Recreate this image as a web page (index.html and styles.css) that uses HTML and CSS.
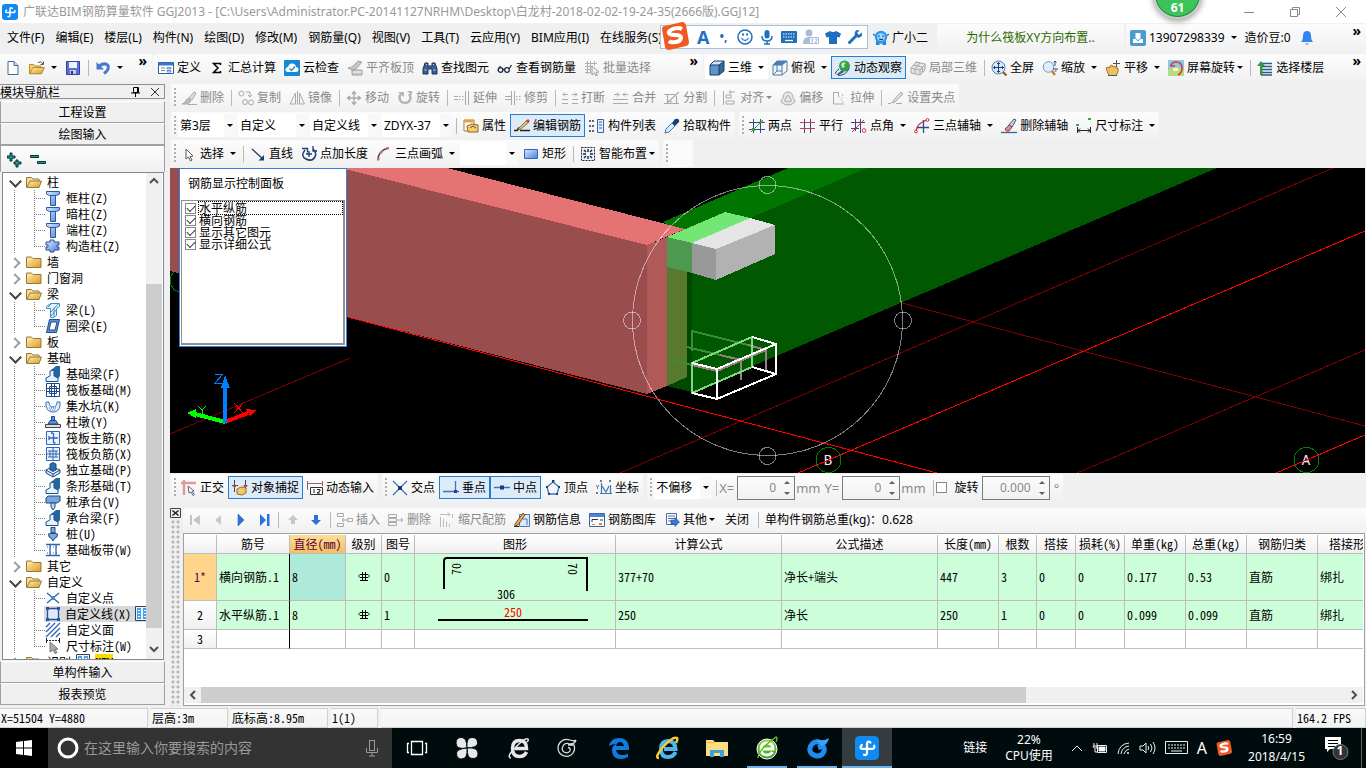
FILE: index.html
```html
<!DOCTYPE html>
<html lang="zh-CN">
<head>
  <meta charset="UTF-8">
  <meta name="viewport" content="width=device-width, initial-scale=1">
  <title>广联达BIM钢筋算量软件 GGJ2013</title>
  <link rel="stylesheet" href="styles.css">
</head>
<body>

<!-- icon set -->
<svg class="defs" aria-hidden="true">
  <defs>
    <linearGradient id="gold" x1="0" y1="0" x2="1" y2="1"><stop offset="0" stop-color="#fff0b0"/><stop offset="1" stop-color="#dc9a20"/></linearGradient>
    <linearGradient id="sky" x1="0" y1="0" x2="1" y2="1"><stop offset="0" stop-color="#d8e8ff"/><stop offset="1" stop-color="#4a7fe0"/></linearGradient>
    <linearGradient id="lime" x1="0" y1="0" x2="0" y2="1"><stop offset="0" stop-color="#8be03c"/><stop offset="1" stop-color="#2c9a1c"/></linearGradient>
  </defs>
  <symbol id="logo" viewBox="0 0 16 16"><rect width="16" height="16" rx="3" fill="#0f8af0"/><path d="M10.300 4.300Q8 2.800 8 5.500v5.500Q8 13.200 6 12.500M4.500 6Q2.500 8.500 5 8.500h6.500Q13.300 8.500 12.800 6.500" fill="none" stroke="#fff" stroke-width="1.500" stroke-linecap="round"/></symbol>
  <symbol id="new" viewBox="0 0 16 16"><path d="M3 1.500h6l4 4v9H3z" fill="#fff" stroke="#47689c"/><path d="M9 1.500v4h4" fill="#c9d8f0" stroke="#47689c"/></symbol>
  <symbol id="open" viewBox="0 0 16 16"><path d="M.5 13.500V4.500h4l1.500 1.500h6v7.500z" fill="#f6d272" stroke="#b98a2c"/><path d="M.8 13.800l3-6.300h11.700l-3 6.300z" fill="url(#gold)" stroke="#b98a2c"/><path d="M9 2.500q3-2 5 1.500m.5-2.500v3h-3" fill="none" stroke="#555"/></symbol>
  <symbol id="save" viewBox="0 0 16 16"><path d="M1.500 1.500h13v13h-13z" fill="#5a6fd4" stroke="#3a3f9c"/><path d="M4 2h8v6H4z" fill="#eef2ff"/><path d="M5 10h6v4H5z" fill="#c8ccdc"/><path d="M6 11h2v3H6z" fill="#2b3580"/></symbol>
  <symbol id="undo" viewBox="0 0 16 16"><path d="M4 6q6-4 9-.5 1.500 4-4 8" fill="none" stroke="#4a78d0" stroke-width="3"/><path d="M1.500 2v7.500h7.500z" fill="#4a78d0"/></symbol>
  <symbol id="define" viewBox="0 0 16 16"><path d="M.5 2.500h15v11H.5z" fill="#fff" stroke="#2e5a9e"/><path d="M1 2.500h14v3H1z" fill="#3f74c4"/><path d="M3 8h4M3 10.500h4" stroke="#888"/><path d="M9 7.500h4v1.500H9zM9 10.500h4v1.500H9z" fill="#cfe0fa" stroke="#3f74c4" stroke-width=".7"/></symbol>
  <symbol id="sigma" viewBox="0 0 16 16"><path d="M11.500 5V3.500H4.500L9 8l-4.500 4.500h7V11" fill="none" stroke="#000" stroke-width="1.500"/></symbol>
  <symbol id="cloudcheck" viewBox="0 0 16 16"><rect width="16" height="16" rx="1" fill="#1787d8"/><path d="M4 12q-3-.5-2.500-3 .5-2 2.500-2 1-4 4.500-3.500Q12 4 12 7q3 .5 2.500 3-.5 2-2.500 2z" fill="#fff"/><path d="M5.500 8.500l2 2 3.500-4" fill="none" stroke="#1787d8" stroke-width="1.300"/></symbol>
  <symbol id="slab" viewBox="0 0 16 16"><path d="M1 8l4-1 6-6 4 1-6 7-4 1zM5 10h10v5H5z" fill="#c6c6c6" stroke="#a4a4a4"/><path d="M6 12h8" stroke="#fff"/></symbol>
  <symbol id="binoc" viewBox="0 0 16 16"><path d="M3 3h3v3h4V3h3l2 6v5h-5V9H6v5H1V9z" fill="#3b5d8f" stroke="#1e355c"/><path d="M2.500 10h2M11.500 10h2M4 4.500h1M11 4.500h1" stroke="#cfe0fa"/></symbol>
  <symbol id="glasses" viewBox="0 0 16 16"><g fill="none" stroke="#222b44" stroke-width="1.300"><circle cx="3.500" cy="10" r="2.300"/><circle cx="10" cy="10" r="2.300"/><path d="M6 9.500h2M1.500 9l2-3M12 9l2.500-4"/></g></symbol>
  <symbol id="batch" viewBox="0 0 16 16"><path d="M1 3.500h12M1 6.500h8M1 9.500h6M1 12.500h6M3.500 1v13M6.500 1v13M10.500 1v5" stroke="#b0b0b0" fill="none"/><path d="M8 6l7 6-3 .5 1.500 3-1.500.5-1.500-3-2.500 2z" fill="#eee" stroke="#a0a0a0"/></symbol>
  <symbol id="cube" viewBox="0 0 16 16"><path d="M1 5h9v10H1z" fill="#5f96c8"/><path d="M1 5l4-4h10l-5 4z" fill="#cfe6f8"/><path d="M10 5l5-4v10l-5 4z" fill="#33689c"/><path d="M1 5h9v10H1zM1 5l4-4h10l-5 4M15 1v10l-5 4" fill="none" stroke="#1d4166"/></symbol>
  <symbol id="wirecube" viewBox="0 0 16 16"><path d="M1 5h9v10H1z" fill="#eaf4fc"/><path d="M1 5l4-4h10l-5 4z" fill="#4f7fb0"/><path d="M1 5h9v10H1zM1 5l4-4h10l-5 4M15 1v10l-5 4M5 5v6h5M1 15l4-4" fill="none" stroke="#527ca6"/></symbol>
  <symbol id="orbit" viewBox="0 0 16 16"><circle cx="9.500" cy="6" r="5.500" fill="#35a04a"/><path d="M6 4q2-3 5-1l-2 2 1 2-3 1z" fill="#b8f0a8"/><path d="M0 14q1-3 4-5M3 15.500q8 0 11-7" stroke="#445" fill="none"/><path d="M1 15l6-5 2 2-5 3z" fill="#2a6a9c"/></symbol>
  <symbol id="local3d" viewBox="0 0 16 16"><path d="M1 8l5-6 9 2v6l-5 5-9-2zM1 8l9 2 5-6M10 10v5M6 2l4 1-5 6v5M3.500 5l9 2v6" fill="#e2e2e2" stroke="#aaa"/></symbol>
  <symbol id="full" viewBox="0 0 16 16"><path d="M11.500 11.500l4 4" stroke="#8f5a2c" stroke-width="2.200"/><circle cx="7.500" cy="7.500" r="6.500" fill="#d8e8fa" stroke="#5f7fa8"/><path d="M7.500 2.500v10M2.500 7.500h10M6 4l1.500-1.500L9 4M6 11l1.500 1.500L9 11M4 6L2.500 7.500 4 9M11 6l1.500 1.500L11 9" fill="none" stroke="#223a70"/></symbol>
  <symbol id="zoomi" viewBox="0 0 16 16"><path d="M9 10l4 5" stroke="#d08020" stroke-width="2.500"/><circle cx="6.500" cy="7" r="5.300" fill="#dfeefa" stroke="#7a96b8"/><path d="M13 1v5M11.500 2.500L13 1l1.500 1.500M11 9h5M12.500 11h2" stroke="#2a4a80" fill="none"/></symbol>
  <symbol id="pan" viewBox="0 0 16 16"><path d="M1 8l2-1 2 1V6l2-1 1 2 2-1 1 2 2 0v4l-2 4H4z" fill="#f0c060" stroke="#a87820"/><path d="M11.500 0v7M8 3.500h7M3 15.500h9" stroke="#456"/></symbol>
  <symbol id="rotscreen" viewBox="0 0 16 16"><path d="M0 0h16v16H0z" fill="#8cc8ea"/><path d="M0 10q8-6 16 0v6H0z" fill="#b8dc80"/><path d="M2.500 6Q4 2 8 2q6 0 6 6 0 5-4 7M3 6l4 0" fill="none" stroke="#d83a3a" stroke-width="1.600"/><path d="M5 8h5v3H5z" fill="#fff6b0"/></symbol>
  <symbol id="floors" viewBox="0 0 16 16"><path d="M4 3.500h11M4 6.500h11M4 9.500h11M4 12.500h11M4 15h11" stroke="#2a5d86" stroke-width="1.500"/><path d="M0 6l4-5 4 5H5.500v9H3V6z" fill="#38963c"/></symbol>
  <!-- modify tools, drawn greyed -->
  <symbol id="brush" viewBox="0 0 16 16"><path d="M8 8l5-6 2 1-4 7z" fill="#ddd" stroke="#aaa"/><path d="M1 14q3 0 4-4l3-2 2 3q-3 4-6 3zM7 14.500h9" fill="#bbb" stroke="#aaa"/></symbol>
  <symbol id="copy" viewBox="0 0 16 16"><g fill="none" stroke="#aaa"><circle cx="3.500" cy="3.500" r="2.500"/><circle cx="7" cy="12" r="2.500"/><circle cx="13" cy="12.500" r="2.500"/><path d="M8 2h4v5m-2-2l2 2 2-2"/></g></symbol>
  <symbol id="mirror" viewBox="0 0 16 16"><path d="M1 14L6.500 3v11zM10.500 3v11h5zM8.500 1v14" fill="none" stroke="#aaa"/></symbol>
  <symbol id="move" viewBox="0 0 16 16"><path d="M8 2v12M2 8h12M6 4l2-2.500L10 4M6 12l2 2.500 2-2.500M4 6L1.500 8 4 10M12 6l2.500 2-2.500 2" fill="none" stroke="#a8a8a8" stroke-width="1.300"/></symbol>
  <symbol id="rotate" viewBox="0 0 16 16"><path d="M4 4q-3 4 0 7.500 4 3 8 0 3-4 0-7.500" fill="none" stroke="#b4b4b4" stroke-width="2.400"/><path d="M1 2h6v5zM10 1h5v4z" fill="#b4b4b4"/></symbol>
  <symbol id="extend" viewBox="0 0 16 16"><path d="M0 6.500h4M5 6.500h1.500M8 6.500h1.500M0 9.500h4M5 9.500h1.500M8 9.500h1.500M11.500 1v14M14.500 1v14" stroke="#aaa" fill="none"/></symbol>
  <symbol id="trim" viewBox="0 0 16 16"><path d="M0 6.500h6M0 9.500h6M6.500 1v14M9.500 1v14M11 6.500h1.500M14 6.500h1.500M11 9.500h1.500M14 9.500h1.500" stroke="#aaa" fill="none"/></symbol>
  <symbol id="breaki" viewBox="0 0 16 16"><path d="M0 9.500h6M10 9.500h6M0 13.500h6M10 13.500h6M1 4.500h5M3 2.500l-2 2 2 2M15 4.500h-5M13 2.500l2 2-2 2" stroke="#aaa" fill="none"/></symbol>
  <symbol id="merge" viewBox="0 0 16 16"><path d="M0 9.500h15M0 13.500h15M1 4.500h5M4 2.500l2 2-2 2M15 4.500h-5M12 2.500l-2 2 2 2" stroke="#aaa" fill="none"/></symbol>
  <symbol id="split" viewBox="0 0 16 16"><path d="M0 4.500h11M0 13.500h15M3.500 4v9M12.500 6v7M3 13L15 2M5 11l3 1" stroke="#aaa" fill="none" stroke-width="1.200"/></symbol>
  <symbol id="align" viewBox="0 0 16 16"><path d="M2.500 1v14M5 5h5v3H5zM5 11h8v3H5zM14 2h-6m2-1.500L8 2l2 1.500" fill="none" stroke="#aaa"/></symbol>
  <symbol id="offset" viewBox="0 0 16 16"><path d="M1 12q0-3 2-4 0-6 5-6t5 6q2 1 2 4-3 3-7 3t-7-3zM4.500 11q0-2 1.500-2.500 0-3 2-3t2 3q1.500.5 1.500 2.500-3.500 2-7 0z" fill="#e6e6e6" stroke="#aaa"/></symbol>
  <symbol id="stretch" viewBox="0 0 16 16"><path d="M2.500 2v12h10M2.500 2.500h5v4" fill="none" stroke="#aaa"/><path d="M8 6.500l5 7M11.500 4v4" fill="none" stroke="#bbb" stroke-dasharray="2 1"/></symbol>
  <symbol id="grip" viewBox="0 0 16 16"><path d="M0 13.500h3M8 13.500h6M5 11l8-9 2 2-8 8-3 1z" fill="#ddd" stroke="#aaa"/></symbol>
  <!-- component row -->
  <symbol id="props" viewBox="0 0 16 16"><path d="M1 2h10v11H1z" fill="#fff" stroke="#b87830"/><path d="M1 2h10v2.500H1z" fill="#e8a040"/><path d="M4 8l5-2 6 1v7H5z" fill="#f2d070" stroke="#8a6420"/><path d="M7 10l3-2 3 2" fill="none" stroke="#555"/></symbol>
  <symbol id="edit" viewBox="0 0 16 16"><path d="M0 12.500h3l2-3M6 12.500h10" stroke="#222" fill="none" stroke-width="1.400"/><path d="M5 10l8-8 2 2-8 7-3 1z" fill="#e8c070" stroke="#6a4a20" stroke-width=".7"/><path d="M12 3l2-2 2 2-2 2z" fill="#d04040"/></symbol>
  <symbol id="list" viewBox="0 0 16 16"><path d="M0 2h2v2H0zM0 7h2v2H0zM0 12h2v2H0zM3 2h2v2H3zM3 7h2v2H3zM3 12h2v2H3z" fill="#567"/><path d="M8.500 1.500h6v13h-6z" fill="#e4eefc" stroke="#3c66a0"/><path d="M10 4h3M10 7h3M10 10h3" stroke="#3c66a0"/></symbol>
  <symbol id="picker" viewBox="0 0 16 16"><path d="M1 15l1-4 6-6 3 3-6 6z" fill="#d8ecff" stroke="#3a78b8"/><path d="M8 5l3-4q3-1 4 1t-1 3l-3 3z" fill="#1d3f70"/></symbol>
  <symbol id="ax2" viewBox="0 0 16 16"><path d="M4.500 1v14M11.500 1v14M0 4.500h16M0 11.500h16" stroke="#37478c"/><path d="M2 14L14 2" stroke="#30a030"/><path d="M10 4l4-2-1 3zM3 10h3v3H3z" fill="#30a030"/></symbol>
  <symbol id="axpar" viewBox="0 0 16 16"><path d="M4.500 1v14M10.500 1v14" stroke="#37478c"/><path d="M0 4.500h15M0 10.500h15" stroke="#c04050"/></symbol>
  <symbol id="axang" viewBox="0 0 16 16"><path d="M4.500 1v12M0 4.500h14M0 10.500h8M9.500 1v14" stroke="#37478c"/><path d="M1 14L13 2" stroke="#d03030"/><circle cx="13" cy="12.500" r="1.800" fill="#fff" stroke="#d03030"/></symbol>
  <symbol id="ax3" viewBox="0 0 16 16"><path d="M2 13Q3 5 13 2" fill="none" stroke="#c82c2c" stroke-width="1.300"/><path d="M9.500 2v13M3 9.500h12" stroke="#37478c" stroke-width="1.300"/><circle cx="2" cy="13.500" r="1.400" fill="#fff" stroke="#c82c2c"/><circle cx="13.500" cy="2" r="1.400" fill="#fff" stroke="#c82c2c"/></symbol>
  <symbol id="axdel" viewBox="0 0 16 16"><path d="M8 7l5-6 2 1-4 7z" fill="#c8d8f0" stroke="#456"/><path d="M4 11l4-4 3 2-3 4q-3 1-4-2z" fill="#e88a90" stroke="#844"/><path d="M0 14.500h16" stroke="#3a62a0" stroke-width="1.300"/></symbol>
  <symbol id="dim" viewBox="0 0 16 16"><path d="M1.500 9v6M14.500 9v6M2 12.500h12M4 10.500l-2 2 2 2M12 10.500l2 2-2 2" stroke="#223" fill="none"/><path d="M0 6h3v2H0zM12 0h3v2h-3z" fill="#34a83c"/></symbol>
  <!-- draw row -->
  <symbol id="cursor" viewBox="0 0 16 16"><path d="M5 3v10l2.500-2 2 4 1.500-1-2-3.500 3-.5z" fill="#fff" stroke="#556"/></symbol>
  <symbol id="line" viewBox="0 0 16 16"><path d="M2 3l11 10" stroke="#1d3c74" stroke-width="1.300"/><path d="M14 9v5.500H8.500z" fill="#1d3c74"/></symbol>
  <symbol id="addlen" viewBox="0 0 16 16"><path d="M4 4q-5 6 1 9 6 3 9-2 2-5-2-8" fill="none" stroke="#1d3c74" stroke-width="1.500"/><path d="M1 2.500h5.500v4M12 0v5h4M8 5v6M5 8h6" fill="none" stroke="#1d3c74" stroke-width="1.300"/></symbol>
  <symbol id="arc" viewBox="0 0 16 16"><path d="M2 14Q2 5 12 2" fill="none" stroke="#37478c" stroke-width="1.400"/><path d="M1 12h2.500v2.500H1zM4 5h2.500v2.500H4zM10.500 1H13v2.500h-2.500z" fill="#e07050"/></symbol>
  <symbol id="rect" viewBox="0 0 16 16"><path d="M1.500 3.500h13v9h-13z" fill="url(#sky)" stroke="#3a66b8"/></symbol>
  <symbol id="smart" viewBox="0 0 16 16"><path d="M1.500 1.500h13v13h-13z" fill="#eaf4ff" stroke="#222" stroke-dasharray="2 1"/><path d="M8 3v3M8 10v3M3 8h3M10 8h3M4 4l2 2M12 4l-2 2M4 12l2-2M12 12l-2-2" stroke="#223" stroke-width="1.400"/></symbol>
  <!-- snap row -->
  <symbol id="ortho" viewBox="0 0 16 16"><path d="M0 3h15M3 0v15" stroke="#dc9c9c" stroke-width="2.500"/><path d="M7 6l6 5-2 .5 2.500 3-1.500 1-2-3.500-2 1z" fill="#fff" stroke="#567"/></symbol>
  <symbol id="osnap" viewBox="0 0 16 16"><path d="M2.500 0v12M13.500 0v8M0 5.500h6" stroke="#444"/><path d="M0 5l2.500 3L5 5zM11 5l2.500 3L16 5z" fill="#b33"/><path d="M5 9l4-2 5 1v5l-4 2-5-1z" fill="#f0c868" stroke="#987020"/></symbol>
  <symbol id="dynin" viewBox="0 0 16 16"><path d="M.5 1v9M15.500 1v5M1 3.500h14" stroke="#a06060"/><path d="M3.500 7.500h12v7h-12z" fill="#fff" stroke="#333"/><path d="M7 9v4M10 9.500h3v1.500l-3 2h3" fill="none" stroke="#222"/></symbol>
  <symbol id="cross" viewBox="0 0 16 16"><path d="M1 1l14 14M15 1L1 15" stroke="#3f74b8" stroke-width="1.300"/><path d="M6 6h4v4H6z" fill="#1d3c80"/></symbol>
  <symbol id="perp" viewBox="0 0 16 16"><path d="M0 11.500h16M12.500 1v11" stroke="#3f74b8" stroke-width="1.300"/><path d="M11 10h3v3h-3z" fill="#1d3c80"/></symbol>
  <symbol id="mid" viewBox="0 0 16 16"><path d="M0 7.500h16" stroke="#3f74b8" stroke-width="1.500"/><path d="M6 5.500h4v4H6z" fill="#1d3c80"/></symbol>
  <symbol id="vertex" viewBox="0 0 16 16"><path d="M8 2l6 5-2 7H4L2 7z" fill="none" stroke="#3f74b8" stroke-width="1.300"/><path d="M7 0h2.500v2.500H7zM1 6h2v2H1zM13 6h2v2h-2zM3 13h2v2H3zM11 13h2v2h-2z" fill="#1d3c80"/></symbol>
  <symbol id="coord" viewBox="0 0 16 16"><path d="M5.500 3v11M4 13.500h12M6 6l4 6 3-6M14.500 5v8" stroke="#3f74b8" fill="none" stroke-width="1.200"/><path d="M0 5l1.500 2v2M3 5L1.500 7M4 0l2 2M6 0L4 2M13 0l2 2M15 0l-2 2M0 12l2 2M2 12l-2 2" stroke="#345" fill="none" stroke-width=".7"/></symbol>
  <!-- rebar edit row -->
  <symbol id="first" viewBox="0 0 16 16"><path d="M3 3h2v10H3zM13 3v10L6 8z" fill="#c4c4c4"/></symbol>
  <symbol id="prev" viewBox="0 0 16 16"><path d="M11 3v10L5 8z" fill="#c8c8c8"/></symbol>
  <symbol id="next" viewBox="0 0 16 16"><path d="M5 2v12l6-6z" fill="#2f70e0" stroke="#1d50b0" stroke-width=".5"/></symbol>
  <symbol id="last" viewBox="0 0 16 16"><path d="M11 2h2.500v12H11zM4 2v12l6-6z" fill="#2f70e0"/></symbol>
  <symbol id="up" viewBox="0 0 16 16"><path d="M8 3l5 5h-3v4H6V8H3z" fill="#c8c8c8"/></symbol>
  <symbol id="down" viewBox="0 0 16 16"><path d="M8 13l5-5h-3V3H6v5H3z" fill="#2f70e0"/></symbol>
  <symbol id="ins" viewBox="0 0 16 16"><path d="M.5 1.500h6v3h-6zM.5 11.500h6v3h-6zM10.500 6.500h5v3h-5zM10 8H5m2-2L5 8l2 2" fill="none" stroke="#aaa"/></symbol>
  <symbol id="delrow" viewBox="0 0 16 16"><path d="M.5 2.500h8v3h-8zM.5 6.500h8v3h-8zM.5 10.500h8v3h-8zM9 8h6m-2-2l2 2-2 2" fill="none" stroke="#aaa"/></symbol>
  <symbol id="scale" viewBox="0 0 16 16"><path d="M1 2.500h10M9 .5l2 2-2 2M1.500 5v10M4.500 7v8M7.500 9v6M10.500 12v3M13.500 2v4" fill="none" stroke="#bbb"/></symbol>
  <symbol id="info" viewBox="0 0 16 16"><path d="M5.500 2.500h10v12h-10z" fill="#dbe9fb" stroke="#4a78b8"/><path d="M9 7l4 0v6" fill="none" stroke="#4a78b8"/><path d="M1 12l8-11 2 2-7 10-3 1z" fill="#e8a850" stroke="#5a3a10" stroke-width=".8"/><path d="M0 14.500h5" stroke="#222"/></symbol>
  <symbol id="lib" viewBox="0 0 16 16"><path d="M.5 1.500h15v13H.5z" fill="#fff" stroke="#3a66a8"/><path d="M1 2h14v3H1z" fill="#4a84d8"/><path d="M3 10V7.500h6M11 8h3" fill="none" stroke="#333"/><path d="M3 12h3v1H3zM10 11h3v2h-3z" fill="#e08a30"/></symbol>
  <symbol id="other" viewBox="0 0 16 16"><path d="M2.500 1.500h10v11h-10z" fill="#fff" stroke="#4a6ea8"/><path d="M4 4h7M4 6.500h7M4 9h4" stroke="#4a6ea8"/><path d="M7 8h4V5.500L15.500 10 11 14.500V12H7z" fill="#3d78d8" stroke="#1d4aa0" stroke-width=".6"/></symbol>
  <!-- menu bar -->
  <symbol id="xiaoer" viewBox="0 0 16 16"><path d="M0 4l3 2M16 4l-3 2" stroke="#2080d0" stroke-width="1.500"/><path d="M3 11h10v4H9.500v-1.500h-3V15H3z" fill="#1f86d8"/><circle cx="8" cy="7" r="6.200" fill="#2b9be8"/><circle cx="8" cy="7" r="3.800" fill="#9fd8ff"/><path d="M6 5.500v1.500M10 5.500v1.500M6 9q2 1 4 0" stroke="#124" fill="none"/></symbol>
  <symbol id="user" viewBox="0 0 16 16"><rect width="16" height="16" rx="2" fill="#4a9cd0"/><path d="M3 9h10v4H3z" fill="#fff"/><path d="M5.500 3h5v5.500L8 10.500 5.500 8.500z" fill="#fff"/><path d="M6 8.500l2 2.500 2-2.500" fill="none" stroke="#4a9cd0"/></symbol>
  <symbol id="bell" viewBox="0 0 16 16"><path d="M8 1q4 0 4 5 0 4 2 6H2q2-2 2-6 0-5 4-5z" fill="#2f86f0"/><path d="M6 13.500h4L8 15z" fill="#2f86f0"/></symbol>
  <symbol id="sogou" viewBox="0 0 28 28"><path d="M1 7q0-3 3-3L21 0q3 0 4 3l3 17q0 3-3 4L8 28q-3 0-4-3z" fill="#f05a22"/><path d="M21 7q-4-2-9 0-5 2-4 4 1 2 6 2 6 0 6 3-1 4-6 4-4 1-6-1" fill="none" stroke="#fff" stroke-width="4"/></symbol>
  <symbol id="smile" viewBox="0 0 16 16"><circle cx="8" cy="8" r="7" fill="none" stroke="#1f6fc0" stroke-width="1.500"/><path d="M4.500 9q3.500 5 7 0" fill="none" stroke="#1f6fc0" stroke-width="1.300"/><path d="M5 4.500h2v2H5zM9 4.500h2v2H9z" fill="#1f6fc0"/></symbol>
  <symbol id="mic" viewBox="0 0 16 16"><rect x="5.500" y="1" width="5" height="8.500" rx="2.500" fill="#1f6fc0"/><path d="M3 7q0 5 5 5t5-5M8 12v3M5 15h6" fill="none" stroke="#1f6fc0" stroke-width="1.500"/></symbol>
  <symbol id="kbd" viewBox="0 0 16 16"><rect y="2" width="16" height="12" rx="1" fill="#1f6fc0"/><path d="M2 5h12M2 8h12" stroke="#fff" stroke-dasharray="1.500 1"/><path d="M4 11.500h8" stroke="#fff" stroke-width="1.300"/></symbol>
  <symbol id="person" viewBox="0 0 16 16"><circle cx="6" cy="4" r="3.500" fill="#a9bcd6"/><path d="M0 14q0-6 6-6 3 0 4 1v6H0z" fill="#a9bcd6"/><path d="M6.500 8.500h9v6h-9z" fill="#fff" stroke="#a9bcd6"/><path d="M8 10h2v1L8 13h2M12 10h2v1l-2 2h2" fill="none" stroke="#a9bcd6"/></symbol>
  <symbol id="shirt" viewBox="0 0 16 16"><path d="M5 2q3 2 6 0l5 2.500-1.500 4-2.500-.5v7H4V8l-2.500.5L0 4.500z" fill="#1f6fc0"/></symbol>
  <symbol id="wrench" viewBox="0 0 16 16"><path d="M2.500 13.500L10 6" stroke="#1f6fc0" stroke-width="3" stroke-linecap="round"/><path d="M14.500 3.500L12 6l-2-2 2.500-2.500Q9 0 8 3q-1 3 1 4.500 2 2 4.500.5 2.500-1.500 1-4.500z" fill="#1f6fc0"/></symbol>
  <!-- tree -->
  <symbol id="fopen" viewBox="0 0 16 14"><path d="M.5 12.500v-10h5l1.500 1.500h6v3" fill="#f4dc98" stroke="#987838"/><path d="M.8 12.500l3.200-6.500h11.500l-2.500 6.500z" fill="url(#gold)" stroke="#987838"/></symbol>
  <symbol id="fclosed" viewBox="0 0 16 14"><path d="M.5 12.500v-10.500h5l1.500 1.500h8v9z" fill="url(#gold)" stroke="#987838"/></symbol>
  <symbol id="col" viewBox="0 0 16 16"><path d="M1.500 1.500h13v2.500l-3 1.500h-7l-3-1.500zM5.500 5.500h5v10h-5z" fill="url(#sky)" stroke="#2b5a9c"/></symbol>
  <symbol id="gzcol" viewBox="0 0 16 16"><path d="M5 2h4v2h5v3h-2v2h2v3H9v2H5v-2H1V9h2V7H1V4h4z" fill="url(#sky)" stroke="#2b4a8c"/></symbol>
  <symbol id="beam" viewBox="0 0 16 16"><path d="M1.500 4.500l4-3h9v3l-3 2v7l-3 2h-3v-9h-4z" fill="#e2f2fc" stroke="#3f8cc8"/><path d="M3 5l4-4M6 10l8-9M6 14l6-7M9 6v9" stroke="#3f8cc8"/></symbol>
  <symbol id="ring" viewBox="0 0 16 16"><path d="M4.500 1.500h10l-3 13H1.500z" fill="#5f92d0" stroke="#1d4a90"/><path d="M6 4h6L10 12H4z" fill="#fff" stroke="#1d4a90"/></symbol>
  <symbol id="fbeam" viewBox="0 0 16 16"><path d="M6 4l5-4h4v10l-3 4-3-4z" fill="#24679e"/><path d="M1 15.500V12l4-2V5l4-1v6l4 2v3.500z" fill="#e6f2fc" stroke="#1d5288"/></symbol>
  <symbol id="raft" viewBox="0 0 16 16"><path d="M1.500 1.500h13v13h-13zM4.500 4.500h7v7h-7zM1 6.500h14M1 9.500h14M6.500 1v14M9.500 1v14" fill="none" stroke="#1d4a84"/></symbol>
  <symbol id="pit" viewBox="0 0 16 16"><path d="M1 4h3q0 5 4 5t4-5h3v4q-1 6-7 6T1 8z" fill="#e2eefc" stroke="#3a70b8"/><path d="M4 10h8M5 12h6" stroke="#3a70b8" stroke-dasharray="1 1"/></symbol>
  <symbol id="pier" viewBox="0 0 16 16"><path d="M6.500 2.500h3v4h-3zM3 10l2-3.500h6L13 10z" fill="#5f92d0" stroke="#1d4a90"/><path d="M.5 10.500h15v3H.5z" fill="#ddd" stroke="#444"/></symbol>
  <symbol id="rmain" viewBox="0 0 16 16"><path d="M1.500 1.500h13v13h-13z" fill="#eef4ff" stroke="#2f64b8"/><path d="M8.500 3v10M4 8h9M4 6v4M8 3H6M8.500 13h2" fill="none" stroke="#2f64b8" stroke-width="1.300"/></symbol>
  <symbol id="rneg" viewBox="0 0 16 16"><path d="M1.500 1.500h13v13h-13z" fill="#eef4ff" stroke="#2f64b8"/><path d="M8 2v12M3 5h10M3 11h10M2 8h12M5 5v6M11 5v6" fill="none" stroke="#2f64b8"/></symbol>
  <symbol id="indep" viewBox="0 0 16 16"><path d="M1 8l6-3 8 3v3l-7 4-7-4zM1 8l7 4 7-4M8 12v3" fill="#cfe2f6" stroke="#1d4a84"/><path d="M5 2l3-1.500L11 2v6L8 9.500 5 8z" fill="#2b6cab" stroke="#1d4a84"/></symbol>
  <symbol id="cap" viewBox="0 0 16 16"><path d="M1 4l2-2h12v5l-3 2H1z" fill="#7aa6dc" stroke="#1d4a84"/><path d="M6 9h4v4l-2 3-2-3z" fill="#bcd6f4" stroke="#1d4a84"/></symbol>
  <symbol id="pile" viewBox="0 0 16 16"><path d="M6 1.500h4v6h-4zM3.500 8q4.500-3 9 0 0 4-2.500 4l-2 3-2-3q-2.500 0-2.500-4z" fill="#7aa6dc" stroke="#1d4a84"/></symbol>
  <symbol id="strip" viewBox="0 0 16 16"><path d="M1 2.500h14M1 13.500h14M5 2v11M11 2v11" stroke="#2f64b8" stroke-width="1.300"/><path d="M2 5h12M2 11h12" stroke="#2f64b8" stroke-dasharray="1 2"/></symbol>
  <symbol id="cpt" viewBox="0 0 16 16"><path d="M2 3l12 10M14 3L2 13" stroke="#2f64a8" stroke-width="1.300"/><circle cx="8" cy="8" r="2" fill="#4a84d8"/></symbol>
  <symbol id="cline" viewBox="0 0 16 16"><path d="M2.500 2.500h11v11h-11z" fill="#dfe8f6" stroke="#2a4f9c" stroke-width="1.300"/><path d="M1 1h3v3H1zM12 1h3v3h-3zM1 12h3v3H1zM12 12h3v3h-3z" fill="#2458b4"/></symbol>
  <symbol id="carea" viewBox="0 0 16 16"><path d="M1 5l4-4M1 10l9-9M1 15L15 1M6 15l9-9M11 15l4-4" stroke="#2f64b8" stroke-width="1.300"/></symbol>
  <symbol id="cdim" viewBox="0 0 16 16"><path d="M1.500 0v5M14.500 0v5M1 2.500h14" stroke="#222" stroke-dasharray="2 1"/><path d="M5 4l8 7-3 .5 2 3-2 1-2-3.500-3 2z" fill="#aaa" stroke="#777"/></symbol>
  <symbol id="rebar" viewBox="0 0 12 12"><path d="M2 3.500h8l1 1v1l-1 1H2l-1-1v-1zM4.500 1v8M7.500 1v8M2 9.500h8" fill="none" stroke="#000"/></symbol>
  <symbol id="book" viewBox="0 0 14 16"><path d="M.5 .5h13v14H.5z" fill="#e8f4ff" stroke="#345"/><path d="M2 2h4v11H2zM8 2h4v11H8z" fill="#4aa0f0"/><path d="M3 4.500h2M3 7.500h2M3 10.500h2M9 4.500h2M9 7.500h2M9 10.500h2" stroke="#fff"/></symbol>
</svg>

<header class="titlebar">
  <svg class="ic"><use href="#logo"/></svg>
  <h1>广联达BIM钢筋算量软件 GGJ2013 - [C:\Users\Administrator.PC-20141127NRHM\Desktop\白龙村-2018-02-02-19-24-35(2666版).GGJ12]</h1>
  <div class="win-btns">
    <button aria-label="最小化"><svg width="12" height="12"><path d="M1 6.500h10"/></svg></button>
    <button aria-label="还原"><svg width="12" height="12"><path d="M1.500 3.500h7v7h-7zM3.500 3.500v-2h7v7h-2"/></svg></button>
    <button aria-label="关闭"><svg width="12" height="12"><path d="M1 1l10 10M11 1L1 11"/></svg></button>
  </div>
  <div class="ball">61</div>
</header>

<nav class="menubar">
  <div class="menus">
    <button>文件(F)</button><button>编辑(E)</button><button>楼层(L)</button><button>构件(N)</button><button>绘图(D)</button><button>修改(M)</button><button>钢筋量(Q)</button><button>视图(V)</button><button>工具(T)</button><button>云应用(Y)</button><button>BIM应用(I)</button><button>在线服务(S)</button>
  </div>
  <div class="ime">
    <svg class="ime-logo"><use href="#sogou"/></svg>
    <b>A</b><span class="punct">•,</span>
    <svg class="ic"><use href="#smile"/></svg>
    <svg class="ic"><use href="#mic"/></svg>
    <svg class="ic"><use href="#kbd"/></svg>
    <svg class="ic"><use href="#person"/></svg>
    <svg class="ic"><use href="#shirt"/></svg>
    <svg class="ic"><use href="#wrench"/></svg>
  </div>
  <button class="btn xiaoer"><svg class="ic"><use href="#xiaoer"/></svg>广小二</button>
  <div class="bar tip"><a href="#">为什么筏板XY方向布置..</a></div>
  <div class="bar account">
    <button class="btn"><svg class="ic"><use href="#user"/></svg>13907298339<i class="arr"></i></button>
    <span class="lbl">造价豆:0</span>
    <button class="btn"><svg class="ic"><use href="#bell"/></svg></button>
    <span class="more">»</span>
  </div>
</nav>

<div class="mainrow">
  <div class="bar">
    <button class="btn"><svg class="ic"><use href="#new"/></svg></button>
    <button class="btn"><svg class="ic"><use href="#open"/></svg><i class="arr"></i></button>
    <button class="btn"><svg class="ic"><use href="#save"/></svg></button>
    <i class="sep"></i>
    <button class="btn"><svg class="ic"><use href="#undo"/></svg><i class="arr"></i></button>
    <span class="more">»</span>
  </div>
  <div class="bar">
    <button class="btn"><svg class="ic"><use href="#define"/></svg>定义</button>
    <button class="btn"><svg class="ic"><use href="#sigma"/></svg>汇总计算</button>
    <button class="btn"><svg class="ic"><use href="#cloudcheck"/></svg>云检查</button>
    <button class="btn" disabled><svg class="ic"><use href="#slab"/></svg>平齐板顶</button>
    <button class="btn"><svg class="ic"><use href="#binoc"/></svg>查找图元</button>
    <button class="btn"><svg class="ic"><use href="#glasses"/></svg>查看钢筋量</button>
    <button class="btn" disabled><svg class="ic"><use href="#batch"/></svg>批量选择</button>
    <span class="more">»</span>
  </div>
  <div class="bar">
    <button class="btn white"><svg class="ic"><use href="#cube"/></svg>三维<i class="arr"></i></button>
    <button class="btn"><svg class="ic"><use href="#wirecube"/></svg>俯视<i class="arr"></i></button>
    <button class="btn on"><svg class="ic"><use href="#orbit"/></svg>动态观察</button>
    <button class="btn" disabled><svg class="ic"><use href="#local3d"/></svg>局部三维</button>
    <i class="sep"></i>
    <button class="btn"><svg class="ic"><use href="#full"/></svg>全屏</button>
    <button class="btn"><svg class="ic"><use href="#zoomi"/></svg>缩放<i class="arr"></i></button>
    <button class="btn"><svg class="ic"><use href="#pan"/></svg>平移<i class="arr"></i></button>
    <button class="btn"><svg class="ic"><use href="#rotscreen"/></svg>屏幕旋转<i class="arr near"></i></button>
    <i class="sep"></i>
    <button class="btn"><svg class="ic"><use href="#floors"/></svg>选择楼层</button>
    <span class="more">»</span>
  </div>
</div>

<div class="work">

  <aside class="nav">
    <div class="nav-title"><span>模块导航栏</span>
      <svg width="10" height="12"><path d="M2.500 1.500h5v5h-5zM6.500 1v6M0 7h9M4.500 7v4" fill="none" stroke="#000"/></svg>
      <svg width="10" height="10"><path d="M1 1l8 8M9 1L1 9" stroke="#333"/></svg>
    </div>
    <button class="nav-tab">工程设置</button>
    <button class="nav-tab">绘图输入</button>
    <div class="nav-tools">
      <svg width="42" height="16"><path d="M0 4h3V1h2v3h3v2H5v3H3V6H0zM7 10h2V8h2v2h3v2h-3v3H9v-3H7z" fill="#20a090" stroke="#033"/><path d="M23.500 3.500h8v2h-8zM30.500 9.500h8v2h-8z" fill="#20a090" stroke="#033"/></svg>
    </div>
    <div class="tree">
      <ul>
        <li class="grp open"><svg class="fo"><use href="#fopen"/></svg>柱</li>
        <li><svg class="ic"><use href="#col"/></svg>框柱(Z)</li>
        <li><svg class="ic"><use href="#col"/></svg>暗柱(Z)</li>
        <li><svg class="ic"><use href="#col"/></svg>端柱(Z)</li>
        <li class="end"><svg class="ic"><use href="#gzcol"/></svg>构造柱(Z)</li>
        <li class="grp"><svg class="fo"><use href="#fclosed"/></svg>墙</li>
        <li class="grp"><svg class="fo"><use href="#fclosed"/></svg>门窗洞</li>
        <li class="grp open"><svg class="fo"><use href="#fopen"/></svg>梁</li>
        <li><svg class="ic"><use href="#beam"/></svg>梁(L)</li>
        <li class="end"><svg class="ic"><use href="#ring"/></svg>圈梁(E)</li>
        <li class="grp"><svg class="fo"><use href="#fclosed"/></svg>板</li>
        <li class="grp open"><svg class="fo"><use href="#fopen"/></svg>基础</li>
        <li><svg class="ic"><use href="#fbeam"/></svg>基础梁(F)</li>
        <li><svg class="ic"><use href="#raft"/></svg>筏板基础(M)</li>
        <li><svg class="ic"><use href="#pit"/></svg>集水坑(K)</li>
        <li><svg class="ic"><use href="#pier"/></svg>柱墩(Y)</li>
        <li><svg class="ic"><use href="#rmain"/></svg>筏板主筋(R)</li>
        <li><svg class="ic"><use href="#rneg"/></svg>筏板负筋(X)</li>
        <li><svg class="ic"><use href="#indep"/></svg>独立基础(P)</li>
        <li><svg class="ic"><use href="#fbeam"/></svg>条形基础(T)</li>
        <li><svg class="ic"><use href="#cap"/></svg>桩承台(V)</li>
        <li><svg class="ic"><use href="#fbeam"/></svg>承台梁(F)</li>
        <li><svg class="ic"><use href="#pile"/></svg>桩(U)</li>
        <li class="end"><svg class="ic"><use href="#strip"/></svg>基础板带(W)</li>
        <li class="grp"><svg class="fo"><use href="#fclosed"/></svg>其它</li>
        <li class="grp open"><svg class="fo"><use href="#fopen"/></svg>自定义</li>
        <li><svg class="ic"><use href="#cpt"/></svg>自定义点</li>
        <li class="sel"><svg class="ic"><use href="#cline"/></svg>自定义线(X)<svg class="bk"><use href="#book"/></svg></li>
        <li><svg class="ic"><use href="#carea"/></svg>自定义面</li>
        <li class="end"><svg class="ic"><use href="#cdim"/></svg>尺寸标注(W)</li>
        <li class="grp"><svg class="fo"><use href="#fopen"/></svg>识别<svg class="bk"><use href="#book"/></svg><b class="new">NEW</b></li>
      </ul>
      <div class="vscroll">
        <svg width="16" height="16"><path d="M4 10l4-4 4 4"/></svg>
        <i></i>
        <svg width="16" height="16"><path d="M4 6l4 4 4-4"/></svg>
      </div>
    </div>
    <button class="nav-tab">单构件输入</button>
    <button class="nav-tab">报表预览</button>
  </aside>

  <main class="main">
    <div class="row">
      <div class="bar">
        <i class="handle"></i>
        <button class="btn" disabled><svg class="ic"><use href="#brush"/></svg>删除</button>
        <i class="sep"></i>
        <button class="btn" disabled><svg class="ic"><use href="#copy"/></svg>复制</button>
        <button class="btn" disabled><svg class="ic"><use href="#mirror"/></svg>镜像</button>
        <i class="sep"></i>
        <button class="btn" disabled><svg class="ic"><use href="#move"/></svg>移动</button>
        <button class="btn" disabled><svg class="ic"><use href="#rotate"/></svg>旋转</button>
        <i class="sep"></i>
        <button class="btn" disabled><svg class="ic"><use href="#extend"/></svg>延伸</button>
        <button class="btn" disabled><svg class="ic"><use href="#trim"/></svg>修剪</button>
        <i class="sep"></i>
        <button class="btn" disabled><svg class="ic"><use href="#breaki"/></svg>打断</button>
        <button class="btn" disabled><svg class="ic"><use href="#merge"/></svg>合并</button>
        <button class="btn" disabled><svg class="ic"><use href="#split"/></svg>分割</button>
        <i class="sep"></i>
        <button class="btn" disabled><svg class="ic"><use href="#align"/></svg>对齐<i class="arr near"></i></button>
        <button class="btn" disabled><svg class="ic"><use href="#offset"/></svg>偏移</button>
        <button class="btn" disabled><svg class="ic"><use href="#stretch"/></svg>拉伸</button>
        <i class="sep"></i>
        <button class="btn" disabled><svg class="ic"><use href="#grip"/></svg>设置夹点</button>
      </div>
    </div>

    <div class="row">
      <div class="bar">
        <i class="handle"></i>
        <label class="combo small"><select aria-label="楼层"><option>第3层</option></select></label>
        <label class="combo"><select aria-label="类别"><option>自定义</option></select></label>
        <label class="combo"><select aria-label="类型"><option>自定义线</option></select></label>
        <label class="combo"><select aria-label="构件"><option>ZDYX-37</option></select></label>
        <i class="sep"></i>
        <button class="btn"><svg class="ic"><use href="#props"/></svg>属性</button>
        <button class="btn on"><svg class="ic"><use href="#edit"/></svg>编辑钢筋</button>
        <button class="btn"><svg class="ic"><use href="#list"/></svg>构件列表</button>
        <button class="btn"><svg class="ic"><use href="#picker"/></svg>拾取构件</button>
      </div>
      <div class="bar">
        <i class="handle"></i>
        <button class="btn"><svg class="ic"><use href="#ax2"/></svg>两点</button>
        <button class="btn"><svg class="ic"><use href="#axpar"/></svg>平行</button>
        <button class="btn"><svg class="ic"><use href="#axang"/></svg>点角<i class="arr"></i></button>
        <button class="btn"><svg class="ic"><use href="#ax3"/></svg>三点辅轴<i class="arr"></i></button>
        <button class="btn"><svg class="ic"><use href="#axdel"/></svg>删除辅轴</button>
        <button class="btn"><svg class="ic"><use href="#dim"/></svg>尺寸标注<i class="arr"></i></button>
      </div>
    </div>

    <div class="row">
      <div class="bar">
        <i class="handle"></i>
        <button class="btn"><svg class="ic"><use href="#cursor"/></svg>选择<i class="arr"></i></button>
        <i class="sep"></i>
        <button class="btn"><svg class="ic"><use href="#line"/></svg>直线</button>
        <button class="btn"><svg class="ic"><use href="#addlen"/></svg>点加长度</button>
        <button class="btn"><svg class="ic"><use href="#arc"/></svg>三点画弧<i class="arr"></i></button>
        <label class="combo small"><select aria-label="半径"><option></option></select></label>
        <button class="btn"><svg class="ic"><use href="#rect"/></svg>矩形</button>
        <i class="sep"></i>
        <button class="btn"><svg class="ic"><use href="#smart"/></svg>智能布置<i class="arr near"></i></button>
      </div>
      <div class="bar">
        <i class="handle"></i>
        <i class="blank"></i>
      </div>
    </div>

    <div class="view">
      <svg class="scene" viewBox="170 168 1195 305" preserveAspectRatio="xMinYMin slice" shape-rendering="crispEdges">
        <rect x="170" y="168" width="1195" height="305" fill="#000"/>
        <g fill="none" stroke="#800000">
          <path d="M170 434L350 358M620 473L1333 168M1077 473L1365 350M902 303L1365 426"/>
          <path stroke="#f00" d="M798 473L1365 231M1276 473L1365 435M170 270L937 473"/>
          <path stroke="#008000" d="M182 270l-8 2-4 5v6l4 7 6 2"/>
        </g>
        <!-- green beam -->
        <path fill="#007500" d="M663 222L788 168H867L692 243z"/>
        <path fill="#005800" d="M692 243L867 168H1217L692 392z"/>
        <path fill="#004800" d="M667 236L692 243V392L667 386z"/>
        <!-- red beam -->
        <path fill="#994d4d" d="M170 168H341L647 245V394L170 271z"/>
        <path fill="#e57373" d="M341 168H447L685 229L647 245z"/>
        <path fill="#b05959" d="M647 245L667 237V386L647 394z"/>
        <path fill="#587a2e" d="M667 250L687 250V377L667 386z"/>
        <!-- blocks -->
        <path fill="#73e673" d="M667 237L725 212L750 218L692 243z"/>
        <path fill="#4d9950" d="M667 237L692 243V273L667 267z"/>
        <path fill="#e5e5e5" d="M692 243L750 218L775 225L716 249z"/>
        <path fill="#999" d="M692 243L716 249V280L692 273z"/>
        <path fill="#b2b2b2" d="M716 249L775 225V254L716 280z"/>
        <!-- wire frame -->
        <g fill="none" stroke-width="2">
          <path stroke="#3c8c3c" d="M692 351V331L748 345M687 347L720 355M672 360L692 365"/>
          <path stroke="#998080" d="M748 345L766 350V371M720 355L741 360V380M692 365L717 371L766 350"/>
          <path stroke="#7fd87f" d="M752 337V367L692 393V363z"/>
          <path stroke="#fff" d="M692 363L717 369V399L692 393M717 369L776 344V374L717 399M776 344L752 337M752 367L776 374"/>
        </g>
        <g fill="none" stroke="#fff" stroke-opacity=".5">
          <circle cx="767.500" cy="320.500" r="135"/><circle cx="767.500" cy="185" r="8.500"/><circle cx="767.500" cy="456" r="8.500"/><circle cx="632" cy="320.500" r="8.500"/><circle cx="903" cy="320.500" r="8.500"/>
        </g>
        <g class="bubble">
          <circle cx="828.500" cy="460" r="12.500"/><text x="828" y="465">B</text>
          <circle cx="1306.500" cy="460" r="12.500"/><text x="1306" y="465">A</text>
        </g>
        <path stroke="#f00" d="M822 463l13-6M1300 463l13-6"/>
        <!-- axis gizmo -->
        <g class="axis">
          <path d="M225 422L195 414" stroke="#0f0" stroke-width="4"/><path class="tip-y" d="M187 413l9-4v9z"/>
          <path d="M225 422L248 413" stroke="#f00" stroke-width="4"/><path class="tip-x" d="M256 410l-10-1 4 7z"/>
          <path d="M225 423V387" stroke="#0080ff" stroke-width="4"/><path class="tip-z" d="M225 375l5 13h-9z"/>
          <path d="M215 374h8l-8 9h8" stroke="#0080ff"/><path d="M234 403l9 10M243 403l-9 10" stroke="#f00"/><path d="M198 406l4 4 4-4M202 410v5" stroke="#0f0"/>
        </g>
      </svg>
      <section class="panel">
        <h2>钢筋显示控制面板</h2>
        <div class="checks">
          <label class="focus"><input type="checkbox" checked><span>水平纵筋</span></label>
          <label><input type="checkbox" checked><span>横向钢筋</span></label>
          <label><input type="checkbox" checked><span>显示其它图元</span></label>
          <label><input type="checkbox" checked><span>显示详细公式</span></label>
        </div>
      </section>
    </div>

    <div class="row snap">
      <div class="bar">
        <i class="handle"></i>
        <button class="btn"><svg class="ic"><use href="#ortho"/></svg>正交</button>
        <button class="btn on"><svg class="ic"><use href="#osnap"/></svg>对象捕捉</button>
        <button class="btn"><svg class="ic"><use href="#dynin"/></svg>动态输入</button>
      </div>
      <div class="bar">
        <i class="handle"></i>
        <button class="btn"><svg class="ic"><use href="#cross"/></svg>交点</button>
        <button class="btn on"><svg class="ic"><use href="#perp"/></svg>垂点</button>
        <button class="btn on"><svg class="ic"><use href="#mid"/></svg>中点</button>
        <button class="btn"><svg class="ic"><use href="#vertex"/></svg>顶点</button>
        <button class="btn"><svg class="ic"><use href="#coord"/></svg>坐标</button>
      </div>
      <div class="bar">
        <i class="handle"></i>
        <label class="combo small"><select aria-label="偏移方式"><option>不偏移</option></select></label>
        <i class="sep"></i>
        <label class="unit" for="off-x">X=</label>
        <span class="spin"><input id="off-x" type="text" value="0" disabled><i></i></span>
        <span class="unit mm">mm</span>
        <label class="unit" for="off-y">Y=</label>
        <span class="spin"><input id="off-y" type="text" value="0" disabled><i></i></span>
        <span class="unit mm">mm</span>
        <i class="sep"></i>
        <label class="rot"><input type="checkbox">旋转</label>
        <span class="spin wide"><input type="text" value="0.000" aria-label="旋转角度" disabled><i></i></span>
        <span class="unit deg">°</span>
      </div>
    </div>

    <div class="bottom">
      <div class="dock">
        <svg width="11" height="10"><path d="M.5 .5h10v9H.5z" fill="#eee" stroke="#444"/><path d="M2.500 2.500l6 5M8.500 2.500l-6 5" stroke="#222" stroke-width="1.500"/></svg>
        <i></i>
      </div>
      <div class="rebar">
        <div class="bar edit">
          <button class="btn slim" aria-label="首行" disabled><svg class="ic"><use href="#first"/></svg></button>
          <button class="btn slim" aria-label="上一行" disabled><svg class="ic"><use href="#prev"/></svg></button>
          <button class="btn slim" aria-label="下一行"><svg class="ic"><use href="#next"/></svg></button>
          <button class="btn slim" aria-label="末行"><svg class="ic"><use href="#last"/></svg></button>
          <i class="sep"></i>
          <button class="btn slim" aria-label="上移" disabled><svg class="ic"><use href="#up"/></svg></button>
          <button class="btn slim" aria-label="下移"><svg class="ic"><use href="#down"/></svg></button>
          <i class="sep"></i>
          <button class="btn" disabled><svg class="ic"><use href="#ins"/></svg>插入</button>
          <button class="btn" disabled><svg class="ic"><use href="#delrow"/></svg>删除</button>
          <button class="btn" disabled><svg class="ic"><use href="#scale"/></svg>缩尺配筋</button>
          <button class="btn"><svg class="ic"><use href="#info"/></svg>钢筋信息</button>
          <button class="btn"><svg class="ic"><use href="#lib"/></svg>钢筋图库</button>
          <button class="btn"><svg class="ic"><use href="#other"/></svg>其他<i class="arr near"></i></button>
          <button class="btn text">关闭</button>
          <i class="sep"></i>
          <span class="lbl">单构件钢筋总重(kg)：0.628</span>
        </div>
        <div class="grid">
          <div class="cells">
            <table>
              <colgroup>
                <col class="w-33"><col class="w-73"><col class="w-56"><col class="w-36"><col class="w-33"><col class="w-201"><col class="w-166"><col class="w-156"><col class="w-61"><col class="w-38"><col class="w-39"><col class="w-49"><col class="w-61"><col class="w-61"><col class="w-71"><col class="w-71">
              </colgroup>
              <thead>
                <tr><th></th><th>筋号</th><th class="cur">直径(mm)</th><th>级别</th><th>图号</th><th>图形</th><th>计算公式</th><th>公式描述</th><th>长度(mm)</th><th>根数</th><th>搭接</th><th>损耗(%)</th><th>单重(kg)</th><th>总重(kg)</th><th>钢筋归类</th><th>搭接形式</th></tr>
              </thead>
              <tbody>
                <tr class="tall">
                  <th class="cur">1*</th><td>横向钢筋.1</td><td class="cell-on">8</td><td class="mid"><svg width="12" height="12"><use href="#rebar"/></svg></td><td>0</td>
                  <td class="shape"><svg width="200" height="46"><path d="M29 35V7q0-3 3-3h140v33" fill="none" stroke="#000" stroke-width="2"/><text x="82" y="45">306</text><text transform="translate(46 21) rotate(-90)">70</text><text transform="translate(153 9) rotate(90)">70</text></svg></td>
                  <td>377+70</td><td>净长+端头</td><td>447</td><td>3</td><td>0</td><td>0</td><td>0.177</td><td>0.53</td><td>直筋</td><td>绑扎</td>
                </tr>
                <tr class="half">
                  <th>2</th><td>水平纵筋.1</td><td>8</td><td class="mid"><svg width="12" height="12"><use href="#rebar"/></svg></td><td>1</td>
                  <td class="shape"><svg width="200" height="28"><path d="M23 19h150" stroke="#000" stroke-width="2"/><text x="89" y="16" fill="#f00">250</text></svg></td>
                  <td>250</td><td>净长</td><td>250</td><td>1</td><td>0</td><td>0</td><td>0.099</td><td>0.099</td><td>直筋</td><td>绑扎</td>
                </tr>
                <tr class="empty"><th>3</th><td></td><td></td><td></td><td></td><td></td><td></td><td></td><td></td><td></td><td></td><td></td><td></td><td></td><td></td><td></td></tr>
              </tbody>
            </table>
          </div>
          <div class="hscroll">
            <svg width="17" height="16"><path d="M11 4L7 8l4 4"/></svg>
            <i></i>
            <svg width="17" height="16"><path d="M6 4l4 4-4 4"/></svg>
          </div>
        </div>
      </div>
    </div>
  </main>
</div>

<footer class="status">
  <span class="s-pos">X=51504 Y=4880</span><span class="s-h">层高:3m</span><span class="s-b">底标高:8.95m</span><span class="s-n">1(1)</span><span class="s-fill"></span><span class="s-fps">164.2 FPS</span>
</footer>

<div class="taskbar">
  <button class="start" aria-label="开始"><svg width="16" height="16"><path d="M0 2l7-1v6.500H0zM8 1l8-1v7.500H8zM0 8.500h7V15l-7-1zM8 8.500h8V16l-8-1z" fill="#fff"/></svg></button>
  <label class="search">
    <svg width="22" height="22"><circle cx="11" cy="11" r="9" fill="none" stroke="#fff" stroke-width="3"/></svg>
    <input type="text" placeholder="在这里输入你要搜索的内容">
    <svg width="12" height="18"><rect x="3.500" y="1.500" width="5" height="10" fill="none" stroke="#999"/><path d="M.5 9v4.500h11V9M6 13.500V17M3 17h6" fill="none" stroke="#999"/></svg>
  </label>
  <div class="apps">
    <button aria-label="任务视图"><svg width="22" height="16"><path d="M5.500 1.500h11v13h-11zM3 3.500H1.500v9H3M19 3.500h1.500v9H19" fill="none" stroke="#fff" stroke-width="1.300"/></svg></button>
    <button aria-label="风扇"><svg width="24" height="24"><g fill="#e8e8e8" stroke="#000b0e"><path d="M12 12Q1 14 1 7q0-6 6-5.500Q12 2 12 12z"/><path d="M12 12Q11 1 17 1.500q6 0 5.500 6 0 4-10.500 4.500z"/><path d="M12 12q11-1 11 5.500 0 5.500-6 5-5 0-5-10.500z"/><path d="M12 12q1 11-5.500 11-5 0-5-6 0-4 10.500-5z"/></g></svg></button>
    <button class="wide" aria-label="浏览器"><svg width="24" height="24"><path d="M19.500 16q-2 4.500-7 4.500-7 0-7-8t7-8q7 0 7 8H8" fill="none" stroke="#e8e8e8" stroke-width="3.500"/><path d="M4 22q-5-1 4-10Q18 1 21 3q1 1-1 3" fill="none" stroke="#e8e8e8" stroke-width="1.500"/></svg></button>
    <button aria-label="算量"><svg width="24" height="24"><path d="M21 4Q19 5.500 15 4 9 2 5 6.500 1 12 5 17.500q5 5 11 1.500 5-4 3-10h-6M21 4q-1 4-6 4-5-2-7 2-2 4 1 6 4 2 6-1 1-3-2-3.500" fill="none" stroke="#ddd" stroke-width="1.300"/></svg></button>
    <button class="wide" aria-label="Edge"><svg width="24" height="24"><path d="M2 10Q4 2 12 2q9 0 10 9v3H9q1 5 6 5 4 0 6-1.500V21q-3 2-7 2-9 0-9-9 0-4 4-6-4 0-7 2zM9 10h8q-1-4-4-4-3 0-4 4z" fill="#0f7ae0"/></svg></button>
    <button aria-label="IE"><svg width="24" height="24"><path d="M20.500 16q-2 5-7.500 5-7 0-7-8t7-8q7 0 7.500 8H9" fill="none" stroke="#4db4f0" stroke-width="4"/><path d="M4 22Q-1 22 8 11 18 0 22 2q1 1-1 5" fill="none" stroke="#f8cc30" stroke-width="2.500"/></svg></button>
    <button aria-label="文件夹"><svg width="22" height="20"><path d="M0 2h7l2 2h13v14H0z" fill="#fbdc7e"/><path d="M0 4.500h9" stroke="#e8b840"/><path d="M4 19v-7h14v7h-4v-4H8v4z" fill="#3ba0dc"/></svg></button>
    <button class="run" aria-label="360浏览器"><svg width="24" height="24"><circle cx="12" cy="13" r="10" fill="url(#lime)" stroke="#fff"/><path d="M17.500 16q-2 3-5.500 3-6 0-6-6t6-6q6 0 6 6H7" fill="none" stroke="#fff" stroke-width="2.800"/><path d="M3 22Q3 14 21 1q2 1 0 5" fill="none" stroke="#5cb82c" stroke-width="1.500"/></svg></button>
    <button class="run" aria-label="广联达"><svg width="24" height="24"><path d="M17 7.500Q12 4 7.500 7.500 3 12 6 17q5 5 11 1.500 4-4 1-8.500l-5 1.500" fill="none" stroke="#1e8df0" stroke-width="5"/><path d="M11 3q7 3 13-1-1 7-8 8z" fill="#38a4f8"/></svg></button>
    <button class="run active" aria-label="钢筋算量"><svg width="24" height="24"><use href="#logo"/></svg></button>
  </div>
  <div class="tray">
    <span class="link">链接</span>
    <span class="cpu">22%<br>CPU使用</span>
    <svg width="12" height="8"><path d="M1 7l5-5 5 5"/></svg>
    <svg width="16" height="14"><path d="M5.500 4.500h9v7h-9zM2 2v3M5 2v3M1 5h4v2H2zM3 8v3h2"/><path d="M7 6h6v4H7z" fill="#fff"/></svg>
    <svg width="13" height="13"><path d="M1 12Q2 2 12 1M4 12q1-7 8-8M7 12q1-4 5-5"/><circle cx="11" cy="11" r="1" fill="#fff"/></svg>
    <svg width="17" height="14"><path d="M1 5h3l3-3v10l-3-3H1zM9 5q1.500 2 0 4M11.500 3q3 4 0 8M14 1q4 6 0 12"/></svg>
    <svg width="23" height="14"><path d="M.5 .5h22v12H.5z"/><path d="M3 4h17M3 7h17" stroke-dasharray="2 1"/><path d="M6 10h11"/></svg>
    <b class="lang">A</b>
    <svg class="ic sg"><use href="#sogou"/></svg>
  </div>
  <div class="clock"><span>16:59<br>2018/4/15</span></div>
  <button class="note" aria-label="通知"><svg width="26" height="26"><path d="M1 2h16v12H6l-3 3v-3H1z" fill="#fff"/><path d="M4 5.500h10M4 8.500h10M4 11.500h7" stroke="#000"/><circle cx="16.500" cy="17" r="7.500" fill="#333" stroke="#777"/></svg><b>1</b></button>
</div>

</body>
</html>
```
FILE: styles.css
```css
* {
  box-sizing: border-box;
}

html, body {
  margin: 0;
  height: 100%;
}

body {
  display: flex;
  flex-direction: column;
  overflow: hidden;
  background: #f0f0f0;
  color: #000;
  font: 12px/16px "Noto Sans", "Noto Sans CJK SC", sans-serif;
}

button, input, select {
  font: inherit;
  color: inherit;
  margin: 0;
  padding: 0;
  border: 0;
  border-radius: 0;
  background: none;
}

h1, h2, ul {
  margin: 0;
  padding: 0;
  font-size: 12px;
  font-weight: normal;
}

svg {
  display: block;
  flex: none;
}

.defs {
  position: absolute;
  width: 0;
  height: 0;
}

.ic {
  width: 16px;
  height: 16px;
}

/* title bar */
.titlebar {
  position: relative;
  display: flex;
  align-items: center;
  height: 23px;
  flex: none;
  padding-left: 2px;
  background: #fff;
}

.titlebar h1 {
  margin-left: 5px;
  color: #999;
  white-space: nowrap;
}

.win-btns {
  display: flex;
  margin-left: auto;
}

.win-btns button {
  width: 46px;
  height: 20px;
  padding-left: 15px;
}

.win-btns path {
  fill: none;
  stroke: #888;
}

.ball {
  position: absolute;
  top: -30px;
  right: 164px;
  width: 49px;
  height: 49px;
  padding-top: 28px;
  border: 2px solid #ccc;
  border-radius: 50%;
  background: #3cc458;
  box-shadow: inset 0 0 0 1px #1d8a38, 0 2px 6px rgba(0,0,0,0.4);
  color: #fff;
  font-weight: bold;
  text-align: center;
  z-index: 3;
}

/* menu bar */
.menubar {
  position: relative;
  display: flex;
  height: 31px;
  flex: none;
  align-items: flex-start;
  padding-top: 1px;
}

.menus {
  display: flex;
  gap: 11px;
  width: 869px;
  padding-left: 7px;
}

.menus button {
  height: 27px;
  white-space: nowrap;
}

.ime {
  position: absolute;
  left: 660px;
  top: 2px;
  display: flex;
  align-items: center;
  gap: 6px;
  width: 208px;
  height: 24px;
  padding-left: 36px;
  border: 1px solid #a8c0dc;
  background: #fff;
  color: #1f6fc0;
}

.ime-logo {
  position: absolute;
  left: 0;
  top: -4px;
  width: 28px;
  height: 28px;
}

.ime b {
  font: bold 18px/20px "Open Sans", sans-serif;
}

.punct {
  width: 16px;
  font-weight: bold;
  text-align: center;
}

.bar {
  display: flex;
  align-items: center;
  height: 27px;
  min-width: 0;
  border-radius: 2px;
  background: linear-gradient(#fcfcfc, #f1f1f1);
  white-space: nowrap;
}

.tip {
  width: 187px;
  justify-content: center;
  margin-right: 2px;
}

.tip a {
  color: #2b6a00;
  text-decoration: none;
}

.lbl {
  padding: 0 4px;
}

.more {
  align-self: flex-start;
  margin-left: auto;
  padding-right: 5px;
  font-weight: bold;
  font-size: 14px;
  line-height: 14px;
}

/* toolbar parts */
.btn {
  display: flex;
  align-items: center;
  gap: 3px;
  height: 23px;
  padding: 0 4px;
  white-space: nowrap;
}

.btn:disabled {
  color: #8a8a8a;
}

.btn.on {
  background: #dcebf7;
  box-shadow: inset 0 0 0 1px #2080d8;
}

.btn.white {
  background: #fff;
}

.btn.slim {
  width: 23px;
  justify-content: center;
}

.btn.text {
  padding: 0 6px;
}

.btn.xiaoer {
  width: 68px;
  height: 27px;
}

.account {
  flex: 1;
}

.arr {
  width: 6px;
  margin-left: 3px;
  border: 3px solid transparent;
  border-top-color: currentColor;
  border-bottom: 0;
}

.arr.near {
  margin-left: -1px;
}

.sep {
  width: 6px;
  height: 16px;
  background: linear-gradient(#b8b8b8, #b8b8b8) 3px 0 / 1px 16px no-repeat;
}

.handle {
  width: 6px;
  height: 20px;
  background: repeating-linear-gradient(#b0b0b0 0 2px, transparent 2px 4px) 3px 0 / 2px 20px no-repeat;
}

.blank {
  width: 24px;
  height: 27px;
  background: #fafafa;
}

.combo {
  position: relative;
  width: 70px;
  height: 23px;
  margin: 0 1px;
  background: linear-gradient(90deg, #fff 58px, #f8f8f8 58px);
}

.combo.small {
  width: 58px;
  background: linear-gradient(90deg, #fff 46px, #f8f8f8 46px);
}

.combo select {
  width: 100%;
  height: 23px;
  padding-left: 2px;
  appearance: none;
}

.combo::after {
  content: "";
  position: absolute;
  right: 3px;
  top: 10px;
  border: 3px solid transparent;
  border-top-color: #000;
  border-bottom: 0;
}

.mainrow {
  display: grid;
  grid-template-columns: 152px 550px 1fr;
  column-gap: 1px;
  height: 30px;
  flex: none;
}

.mainrow .bar {
  padding-left: 1px;
}

/* work area */
.work {
  display: flex;
  flex: 1;
  min-height: 0;
}

.nav {
  display: flex;
  flex-direction: column;
  width: 165px;
  flex: none;
  margin-right: 5px;
  padding-bottom: 3px;
  font-family: "Noto Sans CJK SC", sans-serif;
  font-feature-settings: "hwid";
}

.nav-title {
  display: flex;
  align-items: center;
  gap: 9px;
  height: 15px;
  margin-bottom: 2px;
  padding-right: 4px;
  border: 1px solid #909090;
  border-left: 0;
}

.nav-title span {
  flex: 1;
}

.nav-tab {
  height: 22px;
  flex: none;
  border: 1px solid #a0a0a0;
  border-top-color: #fff;
  background: #f0f0f0;
}

.nav-tools {
  height: 27px;
  flex: none;
  padding: 6px 6px 0;
  border: 1px solid #a0a0a0;
  border-bottom: 0;
  background: linear-gradient(#fdfdfd, #f0f0f0);
}

.tree {
  display: flex;
  flex: 1;
  min-height: 0;
  margin: 0 1px 1px 2px;
  border: 1px solid #828790;
  background: #fff;
  overflow: hidden;
}

.tree ul {
  flex: 1;
  min-width: 0;
  padding: 1px 0 0;
  overflow: hidden;
  list-style: none;
}

.tree li {
  display: flex;
  align-items: center;
  gap: 5px;
  height: 16px;
  padding-left: 42px;
  white-space: nowrap;
  background:
    repeating-linear-gradient(#808080 0 1px, transparent 1px 2px) 11px 0 / 1px 16px no-repeat,
    repeating-linear-gradient(#808080 0 1px, transparent 1px 2px) 31px 0 / 1px 16px no-repeat,
    repeating-linear-gradient(90deg, #808080 0 1px, transparent 1px 2px) 31px 8px / 11px 1px no-repeat;
}

.tree li.end {
  background-size: 1px 16px, 1px 8px, 11px 1px;
}

.tree li.sel {
  gap: 4px;
  background:
    repeating-linear-gradient(#808080 0 1px, transparent 1px 2px) 11px 0 / 1px 16px no-repeat,
    repeating-linear-gradient(#808080 0 1px, transparent 1px 2px) 31px 0 / 1px 16px no-repeat,
    linear-gradient(#d9d9d9, #d9d9d9) 41px 0 / 110px 16px no-repeat;
}

.tree li.grp {
  position: relative;
  padding-left: 23px;
  background: none;
}

.grp::before {
  content: "";
  position: absolute;
  left: 8px;
  top: 5px;
  width: 6px;
  height: 6px;
  border: solid #a0a0a0;
  border-width: 2px 2px 0 0;
  transform: rotate(45deg);
}

.grp.open::before {
  left: 8px;
  top: 3px;
  width: 7px;
  height: 7px;
  border-color: #404040;
  transform: rotate(135deg);
}

.fo {
  width: 16px;
  height: 14px;
}

.bk {
  width: 14px;
  height: 16px;
}

.new {
  background: #ffd800;
}

.vscroll {
  display: flex;
  flex-direction: column;
  width: 16px;
  margin-right: 1px;
  padding-bottom: 2px;
  background: #f0f0f0;
}

.vscroll i {
  height: 71%;
  margin: auto 0 13px;
  background: #cdcdcd;
}

.vscroll path, .hscroll path {
  fill: none;
  stroke: #505050;
  stroke-width: 2;
}

.main {
  display: flex;
  flex: 1;
  min-width: 0;
  flex-direction: column;
}

.row {
  display: flex;
  gap: 4px;
  height: 28px;
  flex: none;
  padding-left: 1px;
}

.view {
  position: relative;
  flex: 1;
  min-height: 0;
  margin-right: 1px;
  background: #000;
  overflow: hidden;
}

.scene {
  width: 100%;
  height: 100%;
}

.bubble circle {
  fill: none;
  stroke: #008000;
}

.bubble text {
  fill: #eee;
  font: 14px "Liberation Mono", monospace;
  text-anchor: middle;
}

.axis path {
  fill: none;
}

.axis .tip-x { fill: #f00; }
.axis .tip-y { fill: #0f0; }
.axis .tip-z { fill: #0080ff; }

/* floating control panel */
.panel {
  position: absolute;
  left: 9px;
  top: 0;
  width: 168px;
  height: 179px;
  display: flex;
  flex-direction: column;
  padding: 0 1px 1px;
  border: 1px solid #2f80e0;
  background: #fff;
}

.panel h2 {
  padding: 7px 7px 8px;
}

.checks {
  flex: 1;
  border: 2px solid #909090;
  border-width: 1px 2px 2px 1px;
  padding-top: 1px;
  font-family: "Noto Sans CJK SC", sans-serif;
}

.checks label {
  display: flex;
  align-items: center;
  height: 12px;
  padding-left: 3px;
  line-height: 12px;
}

.checks span {
  flex: 1;
  margin: 0 1px 0 3px;
}

.focus span {
  outline: 1px dotted #000;
}

input[type="checkbox"] {
  appearance: none;
  width: 11px;
  height: 11px;
  border: 1px solid #888;
  background: #fff;
}

.checks input:checked::after {
  content: "";
  display: block;
  width: 7px;
  height: 4px;
  margin: 1px;
  border: solid #333;
  border-width: 0 0 1px 1px;
  transform: rotate(-45deg);
}

/* snap bar */
.row.snap {
  height: 35px;
  padding-top: 1px;
}

.unit {
  padding-right: 3px;
  color: #8a8a8a;
  font-size: 13px;
}

.unit.mm {
  padding: 0 4px 0 1px;
}

.unit.deg {
  padding: 0 4px;
}

.spin {
  position: relative;
  width: 58px;
  height: 24px;
  border: 1px solid #7a7a7a;
}

.spin.wide {
  width: 68px;
}

.spin input {
  width: 100%;
  height: 22px;
  padding-right: 18px;
  color: #8a8a8a;
  text-align: right;
}

.spin i::before, .spin i::after {
  content: "";
  position: absolute;
  right: 4px;
  top: 4px;
  border: 3px solid transparent;
  border-top: 0;
  border-bottom-color: #606060;
}

.spin i::after {
  top: 15px;
  border-top: 3px solid #606060;
  border-bottom: 0;
}

.rot {
  display: flex;
  align-items: center;
  gap: 8px;
  padding-right: 3px;
}

/* rebar editing */
.bottom {
  display: flex;
  height: 200px;
  flex: none;
}

.dock {
  width: 13px;
  flex: none;
}

.dock i {
  display: block;
  height: 186px;
  margin: 2px 2px 0 1px;
  background: radial-gradient(circle at 2px 2px, #b8b8b8 1px, transparent 2px) 0 0 / 5px 5px;
}

.rebar {
  display: flex;
  flex: 1;
  min-width: 0;
  flex-direction: column;
  padding-bottom: 2px;
}

.bar.edit {
  height: 25px;
  flex: none;
  padding-bottom: 2px;
}

.grid {
  display: flex;
  flex: 1;
  min-height: 0;
  flex-direction: column;
  margin-right: 1px;
  padding: 1px 1px 2px 0;
  border: 1px solid #a0a0a0;
  background: #fff;
}

.cells {
  flex: 1;
  min-height: 0;
  overflow: hidden;
}

table {
  width: 1205px;
  table-layout: fixed;
  border-collapse: separate;
  border-spacing: 0;
  font-family: "Noto Sans CJK SC", sans-serif;
  font-feature-settings: "hwid";
}

.w-33 { width: 33px; }
.w-36 { width: 36px; }
.w-38 { width: 38px; }
.w-39 { width: 39px; }
.w-49 { width: 49px; }
.w-56 { width: 56px; }
.w-61 { width: 61px; }
.w-71 { width: 71px; }
.w-73 { width: 73px; }
.w-156 { width: 156px; }
.w-166 { width: 166px; }
.w-201 { width: 201px; }

th, td {
  height: 19px;
  padding: 0 2px;
  border: solid #bdbdbd;
  border-width: 0 1px 1px 0;
  font-weight: normal;
  text-align: left;
  white-space: nowrap;
  line-height: 14px;
}

th {
  padding: 0;
  background: linear-gradient(#fff, #f0f0f0);
  text-align: center;
}

th.cur {
  background: #ffd58c;
  color: #600040;
}

thead .cur {
  background: linear-gradient(#ffdc98, #f2c060);
}

td {
  background: #ccffd9;
}

.tall td, .tall th { height: 47px; }
.half td, .half th { height: 29px; }

.empty td {
  background: #fff;
}

tbody td:nth-child(2) {
  border-right-color: #000;
}

td.cell-on {
  background: #adead9;
}

td.shape {
  padding: 0;
}

.shape text {
  font-size: 12px;
}

td.mid svg {
  margin: 0 auto;
}

.hscroll {
  display: flex;
  height: 16px;
  flex: none;
  background: #f0f0f0;
}

.hscroll i {
  width: 70%;
  margin-right: auto;
  background: #cdcdcd;
}

/* status bar */
.status {
  display: flex;
  gap: 3px;
  height: 20px;
  flex: none;
  font-family: "Noto Sans CJK SC", sans-serif;
  font-feature-settings: "hwid";
}

.status span {
  padding-left: 1px;
  border: solid #d0d0d0;
  border-width: 1px 1px 1px 0;
  background: linear-gradient(#fafafa, #f2f2f2);
  line-height: 18px;
}

.s-pos { width: 148px; }
.s-h { width: 77px; }
.s-b { width: 97px; }
.s-n { width: 47px; }
.s-fill { flex: 1; }
.s-fps { width: 70px; }

/* windows taskbar */
.taskbar {
  display: flex;
  height: 40px;
  flex: none;
  background: #000b0e;
  color: #fff;
}

.taskbar button {
  display: flex;
  align-items: center;
  justify-content: center;
}

.start {
  width: 48px;
  background: #000;
}

.search {
  display: flex;
  align-items: center;
  width: 344px;
  padding: 0 14px 0 9px;
  background: #333;
}

.search input {
  flex: 1;
  padding-left: 5px;
  font-size: 14px;
}

.search input::placeholder {
  color: #999;
}

.apps {
  display: flex;
}

.apps button {
  width: 50px;
  height: 40px;
}

.apps .wide {
  padding-left: 4px;
}

.apps .run {
  background: linear-gradient(#6cb4f0, #6cb4f0) center bottom / 40px 2px no-repeat;
}

.apps .active {
  background: linear-gradient(#6cb4f0, #6cb4f0) center bottom / 50px 2px no-repeat #343c40;
}

.tray {
  display: flex;
  align-items: center;
  gap: 9px;
  margin-left: auto;
}

.tray path {
  fill: none;
  stroke: #f0f0f0;
}

.tray path[fill="#fff"] {
  fill: #fff;
}

.link {
  margin-right: 9px;
}

.cpu {
  margin-right: 9px;
  text-align: center;
}

.lang {
  font-size: 16px;
  font-weight: normal;
}

.clock {
  display: flex;
  align-items: center;
  padding-left: 16px;
  line-height: 18px;
  text-align: center;
}

.note {
  position: relative;
  width: 57px;
  border-right: 1px solid #666;
  background: none;
  margin-right: 4px;
}

.taskbar .note {
  justify-content: flex-end;
  padding-right: 11px;
}

.note b {
  position: absolute;
  right: 13px;
  top: 15px;
  width: 16px;
  text-align: center;
}
```
